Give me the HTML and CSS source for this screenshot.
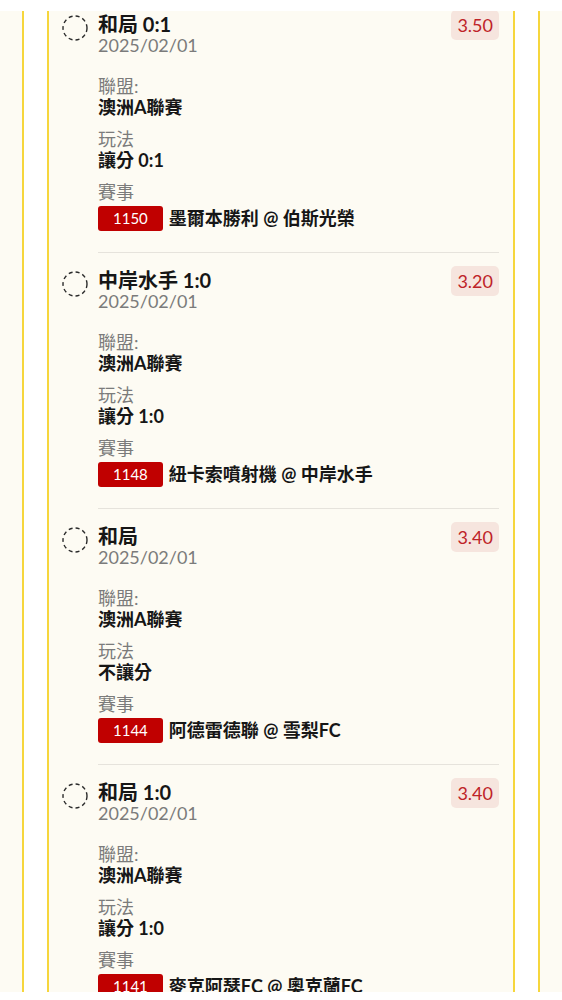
FILE: index.html
```html
<!DOCTYPE html>
<html lang="zh-Hant">
  <head>
    <meta charset="UTF-8" />
    <meta name="viewport" content="width=device-width, initial-scale=1.0" />
    <title>注單</title>
    <link rel="stylesheet" href="styles.css">
  </head>
  <body>
    <div id="frame">
      <div id="rail">
        <div id="slip">
          <ul id="bet-list">
            <li class="bet">
              <svg class="pick" viewBox="0 0 26 26"><circle cx="13" cy="13" r="12" /></svg>
              <div class="bet-body">
                <div class="head">
                  <span class="title">和局 0:1</span>
                  <span class="odds">3.50</span>
                </div>
                <p class="date">2025/02/01</p>
                <p class="label first">聯盟:</p>
                <p class="value">澳洲A聯賽</p>
                <p class="label">玩法</p>
                <p class="value">讓分 0:1</p>
                <p class="label">賽事</p>
                <div class="match">
                  <span class="match-no">1150</span>
                  <span class="value">墨爾本勝利 @ 伯斯光榮</span>
                </div>
              </div>
            </li>
            <li class="bet">
              <svg class="pick" viewBox="0 0 26 26"><circle cx="13" cy="13" r="12" /></svg>
              <div class="bet-body">
                <div class="head">
                  <span class="title">中岸水手 1:0</span>
                  <span class="odds">3.20</span>
                </div>
                <p class="date">2025/02/01</p>
                <p class="label first">聯盟:</p>
                <p class="value">澳洲A聯賽</p>
                <p class="label">玩法</p>
                <p class="value">讓分 1:0</p>
                <p class="label">賽事</p>
                <div class="match">
                  <span class="match-no">1148</span>
                  <span class="value">紐卡索噴射機 @ 中岸水手</span>
                </div>
              </div>
            </li>
            <li class="bet">
              <svg class="pick" viewBox="0 0 26 26"><circle cx="13" cy="13" r="12" /></svg>
              <div class="bet-body">
                <div class="head">
                  <span class="title">和局</span>
                  <span class="odds">3.40</span>
                </div>
                <p class="date">2025/02/01</p>
                <p class="label first">聯盟:</p>
                <p class="value">澳洲A聯賽</p>
                <p class="label">玩法</p>
                <p class="value">不讓分</p>
                <p class="label">賽事</p>
                <div class="match">
                  <span class="match-no">1144</span>
                  <span class="value">阿德雷德聯 @ 雪梨FC</span>
                </div>
              </div>
            </li>
            <li class="bet">
              <svg class="pick" viewBox="0 0 26 26"><circle cx="13" cy="13" r="12" /></svg>
              <div class="bet-body">
                <div class="head">
                  <span class="title">和局 1:0</span>
                  <span class="odds">3.40</span>
                </div>
                <p class="date">2025/02/01</p>
                <p class="label first">聯盟:</p>
                <p class="value">澳洲A聯賽</p>
                <p class="label">玩法</p>
                <p class="value">讓分 1:0</p>
                <p class="label">賽事</p>
                <div class="match">
                  <span class="match-no">1141</span>
                  <span class="value">麥克阿瑟FC @ 奧克蘭FC</span>
                </div>
              </div>
            </li>
          </ul>
        </div>
      </div>
    </div>
  </body>
</html>
```

FILE: styles.css
```css
body {
  margin: 0;
  background-color: #ffffff;
  font-family: "Lato", "Noto Sans CJK TC", sans-serif;
  color: #161616;
}

#frame {
  margin-top: 11px;
  height: 981px;
  background-color: #fdfbf3;
  padding: 0 22px;
}

#rail {
  height: 100%;
  background-color: #ffffff;
  border-left: 2px solid #f6d63c;
  border-right: 2px solid #f6d63c;
  padding: 0 23px;
}

#slip {
  height: 100%;
  overflow: hidden;
  background-color: #fdfbf3;
  border-left: 2px solid #f6d63c;
  border-right: 2px solid #f6d63c;
  padding: 0 14px 0 13px;
}

/* list is scrolled a little */
#bet-list {
  list-style: none;
  margin: -14px 0 0 0;
  padding: 0;
}

.bet {
  display: flex;
  gap: 10px;
}

.pick {
  flex: none;
  width: 26px;
  height: 26px;
  margin-top: 18px;
}

.pick circle {
  fill: none;
  stroke: #2a2a2a;
  stroke-width: 1.4;
  stroke-dasharray: 4 3.1;
}

.bet-body {
  flex: 1;
  padding: 17px 0 21px;
  border-bottom: 1px solid #e6e3dc;
}

.head {
  display: flex;
  justify-content: space-between;
  align-items: center;
  height: 21px;
}

.title {
  font-size: 20px;
  font-weight: 700;
  line-height: 21px;
}

.odds {
  height: 30px;
  line-height: 30px;
  padding: 0 6px;
  border-radius: 5px;
  background-color: #f6e5de;
  color: #be2328;
  font-size: 18px;
}

p {
  margin: 0;
}

.date,
.label {
  font-size: 18px;
  line-height: 21px;
  color: #7b7b7b;
}

.label {
  margin-top: 11px;
}

.label.first {
  margin-top: 20px;
}

.value {
  font-size: 18px;
  font-weight: 700;
  line-height: 21px;
}

.match {
  display: flex;
  align-items: center;
  gap: 6px;
  margin-top: 3px;
  height: 25px;
}

.match-no {
  height: 25px;
  line-height: 25px;
  padding: 0 15px;
  border-radius: 3px;
  background-color: #c00000;
  color: #ffffff;
  font-size: 15px;
}
```
